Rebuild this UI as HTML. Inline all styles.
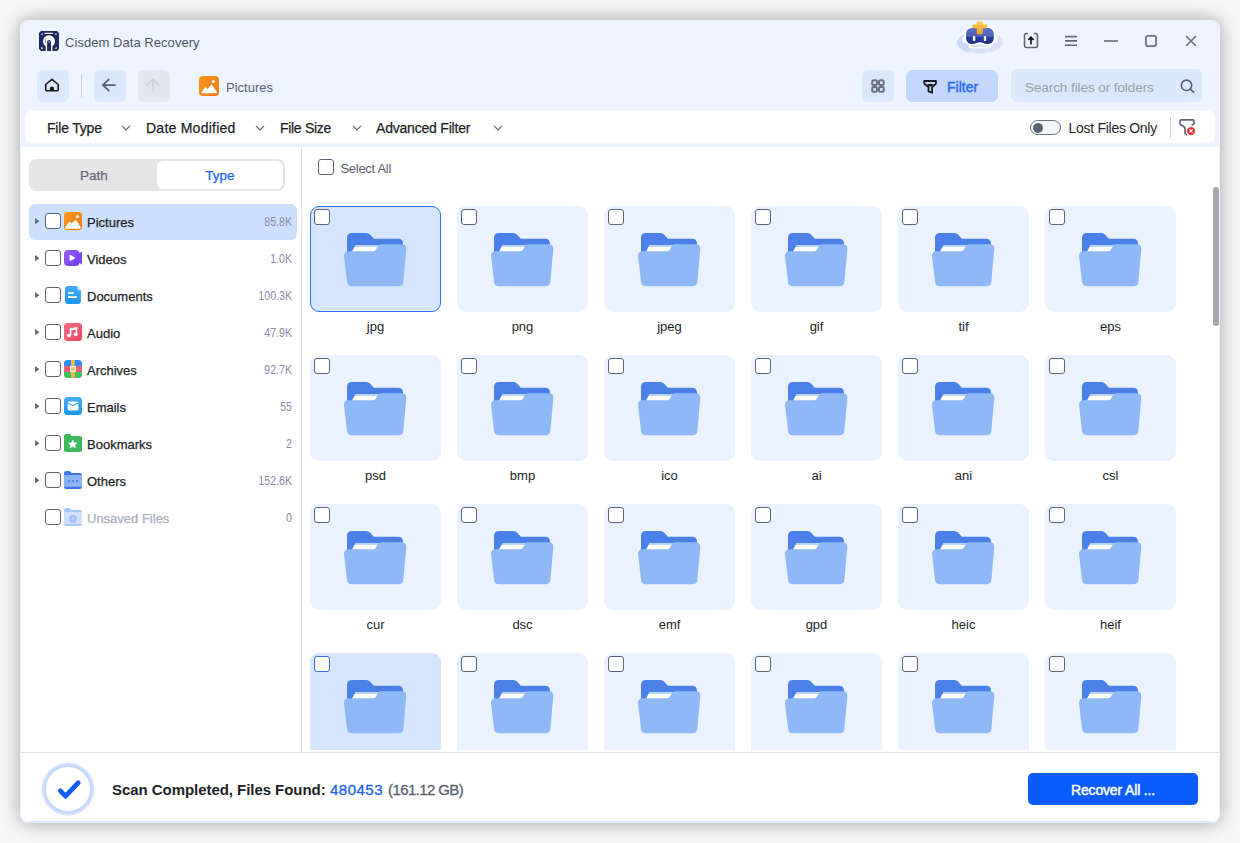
<!DOCTYPE html>
<html><head><meta charset="utf-8">
<style>
*{box-sizing:border-box;margin:0;padding:0}
html,body{width:1240px;height:843px;overflow:hidden;background:#f7f7f7;font-family:"Liberation Sans",sans-serif}
.abs{position:absolute}
#win{position:absolute;left:20px;top:20px;width:1200px;height:803px;background:#edf4ff;border-radius:8px;box-shadow:0 0 20px rgba(0,0,0,0.34)}
.t{position:absolute;white-space:nowrap;line-height:1}
.btn{position:absolute;border-radius:6px}
.chev{position:absolute;width:10px;height:6px}
.cb{position:absolute;width:16px;height:16px;border:1.3px solid #5d6375;border-radius:3px;background:#fff}
.card{position:absolute;width:131px;height:106px;background:#ebf2fe;border-radius:9px}
.lbl{position:absolute;width:131px;text-align:center;font-size:13px;color:#1d1f26;line-height:1}
.fb{font-size:14px;color:#1d1f26;-webkit-text-stroke:0.25px #1d1f26}
</style></head><body>
<div id="win"></div>

<svg class="abs" style="left:39px;top:31px" width="20" height="20" viewBox="0 0 20 20">
  <path d="M2 0H18L20 2V18L18 20H2L0 18V2Z" fill="#1f2a5e"/>
  <rect x="5.3" y="1.8" width="8.8" height="1.3" rx="0.6" fill="#fff" opacity="0.9"/>
  <path d="M2.3 2.2 L4.3 3 L2.6 4.2Z M17.6 2.2 L15.6 3 L17.3 4.2Z M2.2 18 L2.6 15.6 L4.2 17.5Z M17.8 18 L17.4 15.8 L15.8 17.6Z" fill="#fff"/>
  <circle cx="10" cy="10.2" r="6" fill="#fff"/>
  <rect x="6.7" y="14" width="6.7" height="6" fill="#fff"/>
  <path d="M8.1 20 V10.9 Q8.1 9 10.05 9 Q12 9 12 10.9 V20Z" fill="#1f2a5e"/>
  <rect x="9.4" y="10.3" width="1.4" height="1.1" fill="#fff" opacity="0.85"/>
  <path d="M7 7.5 Q5.6 9.8 6.8 12" fill="none" stroke="#1f2a5e" stroke-width="0.5"/>
</svg>
<div class="t" style="left:65px;top:36px;font-size:13px;color:#4d5466;letter-spacing:0.05px">Cisdem Data Recovery</div>

<svg class="abs" style="left:952px;top:18px" width="56" height="40" viewBox="0 0 56 40">
  <defs>
  <linearGradient id="rbh" x1="0" y1="0" x2="0" y2="1"><stop offset="0" stop-color="#5d70c4"/><stop offset="0.5" stop-color="#4e62b6"/><stop offset="0.6" stop-color="#2b3b9d"/><stop offset="1" stop-color="#202f90"/></linearGradient>
  <linearGradient id="rbe" x1="0" y1="0" x2="1" y2="0"><stop offset="0" stop-color="#cad9fa"/><stop offset="1" stop-color="#e3e1fb"/></linearGradient>
  <linearGradient id="rbs" x1="0" y1="0" x2="0" y2="1"><stop offset="0" stop-color="#fdc94c"/><stop offset="1" stop-color="#f5a52a"/></linearGradient>
  <linearGradient id="rbb" x1="0" y1="0" x2="1" y2="0"><stop offset="0" stop-color="#e3d6fb"/><stop offset="1" stop-color="#d3eef7"/></linearGradient>
  </defs>
  <ellipse cx="28" cy="24.5" rx="23" ry="11.2" fill="url(#rbe)"/>
  <path d="M18 33 Q28 37 38 33 L37 35.6 H19Z" fill="#f4f2fd" opacity="0.8"/>
  <ellipse cx="12.3" cy="21.5" rx="2" ry="3.2" fill="#fff"/><ellipse cx="43.6" cy="21.5" rx="2" ry="3.2" fill="#fff"/>
  <path d="M16.5 23 H39.5 V27 Q39.5 30.5 35 30.5 H21 Q16.5 30.5 16.5 27Z" fill="#fff"/>
  <path d="M18 24 H38 V27 Q38 29.3 35 29.3 H21 Q18 29.3 18 27Z" fill="url(#rbb)"/>
  <path d="M14 17 C14 11.5 17 10 21 10 H35 C39 10 41.8 11.5 41.8 17 V19.5 C41.8 24 39 26 35.5 26 C32 26 30.5 24.3 27.9 24.3 C25.3 24.3 23.8 26 20.3 26 C16.8 26 14 24 14 19.5Z" fill="#fff" stroke="#fff" stroke-width="3.2" stroke-linejoin="round"/>
  <path d="M14 17 C14 11.5 17 10 21 10 H35 C39 10 41.8 11.5 41.8 17 V19.5 C41.8 24 39 26 35.5 26 C32 26 30.5 24.3 27.9 24.3 C25.3 24.3 23.8 26 20.3 26 C16.8 26 14 24 14 19.5Z" fill="url(#rbh)"/>
  <rect x="20.9" y="18" width="2.4" height="5" rx="0.8" fill="#fff"/>
  <rect x="31.8" y="18" width="2.4" height="5" rx="0.8" fill="#fff"/>
  <path d="M25.8 4.5 H29.8 V7.5 H34.2 V9.3 H29.8 V15.2 H25.8 V9.3 H21.2 V7.5 H25.8Z" fill="url(#rbs)" stroke="url(#rbs)" stroke-width="2" stroke-linejoin="round"/>
</svg>
<svg class="abs" style="left:1023px;top:32px" width="16" height="17" viewBox="0 0 16 17">
  <path d="M5 1.5 H3.5 Q1.5 1.5 1.5 3.5 V13.5 Q1.5 15.5 3.5 15.5 H12.5 Q14.5 15.5 14.5 13.5 V3.5 Q14.5 1.5 12.5 1.5 H11" fill="none" stroke="#5f6475" stroke-width="1.6"/>
  <path d="M8 12.5 V6.5" stroke="#111" stroke-width="1.6"/>
  <path d="M4.8 7.8 L8 4.3 L11.2 7.8Z" fill="#111" stroke="#111" stroke-width="0.5" stroke-linejoin="round"/>
</svg>
<svg class="abs" style="left:1064px;top:35px" width="14" height="12" viewBox="0 0 14 12">
  <path d="M1 1.6H13M1 5.9H13M1 10.3H13" stroke="#626778" stroke-width="1.6"/>
</svg>
<svg class="abs" style="left:1103px;top:38px" width="16" height="6" viewBox="0 0 16 6">
  <path d="M1 3H15" stroke="#6b7080" stroke-width="1.7"/>
</svg>
<svg class="abs" style="left:1144px;top:34px" width="14" height="14" viewBox="0 0 14 14">
  <rect x="1.9" y="1.9" width="10.2" height="10.2" rx="2" fill="none" stroke="#6b7080" stroke-width="1.8"/>
</svg>
<svg class="abs" style="left:1185px;top:35px" width="12" height="12" viewBox="0 0 12 12">
  <path d="M1 1L11 11M11 1L1 11" stroke="#6b7080" stroke-width="1.6"/>
</svg>

<div class="btn" style="left:37px;top:70px;width:32px;height:32px;background:#dae7fc"></div>
<svg class="abs" style="left:44px;top:77px" width="18" height="18" viewBox="0 0 18 18">
  <path d="M1.7 7.5 L7.95 2.3 L14.2 7.5 V12.8 Q14.2 13.8 13.2 13.8 H2.7 Q1.7 13.8 1.7 12.8Z" fill="none" stroke="#1a1a1a" stroke-width="1.6" stroke-linejoin="round"/>
  <path d="M5.9 13.8 V11.3 Q5.9 9.4 7.95 9.4 Q10 9.4 10 11.3 V13.8Z" fill="#1a1a1a"/>
</svg>
<div class="abs" style="left:81px;top:75px;width:1px;height:22px;background:#c7ccd6"></div>
<div class="btn" style="left:94px;top:70px;width:32px;height:32px;background:#dae7fc"></div>
<svg class="abs" style="left:100px;top:76px" width="20" height="20" viewBox="0 0 20 20">
  <path d="M15.1 9.05 H3.3 M8.8 3.4 L2.9 9.05 L8.8 14.7" fill="none" stroke="#5b6072" stroke-width="1.8" stroke-linecap="round" stroke-linejoin="round"/>
</svg>
<div class="btn" style="left:138px;top:70px;width:32px;height:32px;background:#e2e7ef"></div>
<svg class="abs" style="left:144px;top:76px" width="20" height="20" viewBox="0 0 20 20">
  <path d="M9.05 14.7 V3.3 M3.4 8.8 L9.05 2.9 L14.7 8.8" fill="none" stroke="#cfd2d8" stroke-width="1.8" stroke-linecap="round" stroke-linejoin="round"/>
</svg>
<svg class="abs" style="left:199px;top:76px" width="20" height="20" viewBox="0 0 20 20">
  <defs><linearGradient id="og" x1="0" y1="0" x2="1" y2="1"><stop offset="0" stop-color="#fa961f"/><stop offset="1" stop-color="#ee7a12"/></linearGradient></defs>
  <rect width="20" height="20" rx="4" fill="url(#og)"/>
  <circle cx="14.3" cy="5.5" r="1.6" fill="#fff"/>
  <path d="M2.3 16.5 L6.3 11 L8.5 13 L12.5 8.3 L18 16 Q18 17.3 16.8 17.3 H3.3 Q2 17.3 2.3 16.5Z" fill="#fff"/>
</svg>
<div class="t" style="left:226px;top:80.6px;font-size:13px;color:#5a6275">Pictures</div>

<div class="btn" style="left:862px;top:70px;width:32px;height:32px;background:#dbe7fc"></div>
<svg class="abs" style="left:870px;top:79px" width="16" height="15" viewBox="0 0 16 15">
  <g fill="none" stroke="#6b7080" stroke-width="2">
  <rect x="2.2" y="1.2" width="4.75" height="4.75" rx="1.5"/><rect x="8.95" y="1.2" width="4.75" height="4.75" rx="1.5"/>
  <rect x="2.2" y="7.95" width="4.75" height="4.75" rx="1.5"/><rect x="8.95" y="7.95" width="4.75" height="4.75" rx="1.5"/></g>
</svg>
<div class="btn" style="left:906px;top:70px;width:92px;height:32px;background:#c3d7fc"></div>
<svg class="abs" style="left:922px;top:79px" width="16" height="16" viewBox="0 0 16 16">
  <path d="M2.3 2 H14 V4.6 L10.1 8.3 V13.7 L6.5 12.4 V8.3 L2.3 4.6Z" fill="none" stroke="#16181f" stroke-width="1.8" stroke-linejoin="round"/>
  <path d="M5 5.1 H11.5 L9.6 7.4 H6.9Z" fill="#16181f"/>
</svg>
<div class="t" style="left:947px;top:80.2px;font-size:14px;color:#2a6cf2;-webkit-text-stroke:0.45px #2a6cf2">Filter</div>

<div class="btn" style="left:1011px;top:69px;width:191px;height:33px;background:#dae7fc"></div>
<div class="t" style="left:1025px;top:81px;font-size:13.5px;color:#9a9fa9;letter-spacing:-0.08px">Search files or folders</div>
<svg class="abs" style="left:1179px;top:78px" width="17" height="17" viewBox="0 0 17 17">
  <circle cx="7.5" cy="7.3" r="5.2" fill="none" stroke="#5c6070" stroke-width="1.6"/>
  <path d="M11.3 11.1 L14.6 14.2" stroke="#5c6070" stroke-width="1.7" stroke-linecap="round"/>
</svg>

<div class="abs" style="left:25px;top:111px;width:1190px;height:32px;background:#fff;border-radius:6px"></div>
<div class="t fb" style="left:47px;top:121px;letter-spacing:-0.2px">File Type</div>
<svg class="chev" style="left:121px;top:124.5px" viewBox="0 0 10 6"><path d="M1 0.8L5 4.8L9 0.8" fill="none" stroke="#5f6475" stroke-width="1.2"/></svg>
<div class="t fb" style="left:146px;top:121px;letter-spacing:0.25px">Date Modified</div>
<svg class="chev" style="left:255px;top:124.5px" viewBox="0 0 10 6"><path d="M1 0.8L5 4.8L9 0.8" fill="none" stroke="#5f6475" stroke-width="1.2"/></svg>
<div class="t fb" style="left:280px;top:121px;letter-spacing:-0.3px">File Size</div>
<svg class="chev" style="left:351.5px;top:124.5px" viewBox="0 0 10 6"><path d="M1 0.8L5 4.8L9 0.8" fill="none" stroke="#5f6475" stroke-width="1.2"/></svg>
<div class="t fb" style="left:376px;top:121px;letter-spacing:-0.2px">Advanced Filter</div>
<svg class="chev" style="left:492.5px;top:124.5px" viewBox="0 0 10 6"><path d="M1 0.8L5 4.8L9 0.8" fill="none" stroke="#5f6475" stroke-width="1.2"/></svg>
<div class="abs" style="left:1030px;top:120px;width:31px;height:15px;border:1.3px solid #6b7080;border-radius:8px;background:#f6f7f9"></div>
<div class="abs" style="left:1033px;top:122.5px;width:10px;height:10px;border-radius:50%;background:#5c6275"></div>
<div class="t" style="left:1068.5px;top:121px;font-size:14px;color:#1d1f26;letter-spacing:-0.28px">Lost Files Only</div>
<div class="abs" style="left:1170px;top:117px;width:1px;height:21px;background:#c8ccd4"></div>
<svg class="abs" style="left:1178px;top:118px" width="20" height="20" viewBox="0 0 20 20">
  <path d="M14.3 6.8 Q16 6.6 16 5.3 V3 Q16 1.9 14.9 1.9 H3.2 Q2.1 1.9 2.1 3 V5.6 Q2.1 6.5 3 7 L6.2 9 Q7 9.6 7 10.5 V15 Q7 16.3 8.6 16.8" fill="none" stroke="#60657a" stroke-width="1.7" stroke-linecap="round" stroke-linejoin="round"/>
  <circle cx="13" cy="13" r="4.3" fill="#f0252f" stroke="#fff" stroke-width="0.6"/>
  <path d="M11.4 11.4 L14.6 14.6 M14.6 11.4 L11.4 14.6" stroke="#fff" stroke-width="1.3"/>
</svg>

<div class="abs" style="left:21px;top:147px;width:1198px;height:674px;background:#fff;border-radius:0 0 7px 7px"></div>
<div class="abs" style="left:301px;top:147px;width:1px;height:605px;background:#e4e4e6"></div>
<div class="abs" style="left:21px;top:752px;width:1198px;height:1px;background:#e2e2e4"></div>
<div class="abs" style="left:28px;top:821px;width:1184px;height:2px;background:#dde9fc"></div>

<div class="abs" style="left:29px;top:159px;width:256px;height:32px;background:#e5e5e5;border-radius:7px"></div>
<div class="abs" style="left:157px;top:161px;width:126px;height:28px;background:#fff;border-radius:6px"></div>
<div class="t" style="left:30px;top:169.2px;width:128px;text-align:center;font-size:13.5px;color:#646a78;-webkit-text-stroke:0.25px #646a78">Path</div>
<div class="t" style="left:157px;top:169.2px;width:126px;text-align:center;font-size:13.5px;color:#1a62f0;-webkit-text-stroke:0.25px #1a62f0">Type</div>
<div class="abs" style="left:29px;top:204px;width:268px;height:36px;background:#cde0fb;border-radius:6px"></div>

<svg class="abs" style="left:35px;top:217.8px" width="6" height="8" viewBox="0 0 6 8"><path d="M0.1 0 L4.4 3.15 L0.1 6.3Z" fill="#5f6475"/></svg>
<div class="cb" style="left:45px;top:213px"></div>
<svg class="abs" style="left:64px;top:212px" width="18" height="18" viewBox="0 0 18 18"><defs><linearGradient id="og2" x1="0" y1="0" x2="1" y2="1"><stop offset="0" stop-color="#fb9a22"/><stop offset="1" stop-color="#ee7810"/></linearGradient></defs>
<rect width="18" height="18" rx="3.5" fill="url(#og2)"/><circle cx="13.5" cy="4.4" r="1.5" fill="#fff"/>
<path d="M1.2 15.3 L5.3 9.4 L7.3 11.6 L11.9 7.7 L16.7 15.3 Q17 16.7 15.6 16.7 H2.4 Q1 16.7 1.2 15.3Z" fill="#fff"/></svg>
<div class="t" style="left:87px;top:215.7px;font-size:13px;color:#1d1f26;-webkit-text-stroke:0.25px #1d1f26">Pictures</div>
<div class="t" style="left:192px;top:216.2px;width:100px;text-align:right;font-size:12.5px;color:#8a8aa8;transform:scaleX(0.85);transform-origin:right center">85.8K</div>
<svg class="abs" style="left:35px;top:254.8px" width="6" height="8" viewBox="0 0 6 8"><path d="M0.1 0 L4.4 3.15 L0.1 6.3Z" fill="#5f6475"/></svg>
<div class="cb" style="left:45px;top:250px"></div>
<svg class="abs" style="left:64px;top:249px" width="18" height="18" viewBox="0 0 18 18"><defs><linearGradient id="vg" x1="0" y1="0" x2="1" y2="1"><stop offset="0" stop-color="#9d60f7"/><stop offset="1" stop-color="#6b3bf0"/></linearGradient></defs>
<rect x="0" y="1" width="15.5" height="15.9" rx="4" fill="url(#vg)"/>
<path d="M14.5 5 L18 2.3 V15.7 L14.5 13Z" fill="#7a48f2"/>
<path d="M5.6 6.3 Q5.6 5.5 6.4 5.9 L10.8 8.4 Q11.4 8.9 10.8 9.4 L6.4 11.8 Q5.6 12.2 5.6 11.4Z" fill="#fff"/></svg>
<div class="t" style="left:87px;top:252.7px;font-size:13px;color:#1d1f26;-webkit-text-stroke:0.25px #1d1f26">Videos</div>
<div class="t" style="left:192px;top:253.2px;width:100px;text-align:right;font-size:12.5px;color:#8a8aa8;transform:scaleX(0.85);transform-origin:right center">1.0K</div>
<svg class="abs" style="left:35px;top:291.8px" width="6" height="8" viewBox="0 0 6 8"><path d="M0.1 0 L4.4 3.15 L0.1 6.3Z" fill="#5f6475"/></svg>
<div class="cb" style="left:45px;top:287px"></div>
<svg class="abs" style="left:64px;top:286px" width="18" height="18" viewBox="0 0 18 18"><defs><linearGradient id="dg" x1="0" y1="0" x2="0" y2="1"><stop offset="0" stop-color="#44acf7"/><stop offset="1" stop-color="#1a98f0"/></linearGradient></defs>
<path d="M4 0 H12.9 L16.9 4.4 V14.9 Q16.9 17.9 13.9 17.9 H4 Q1 17.9 1 14.9 V3 Q1 0 4 0Z" fill="url(#dg)"/>
<path d="M12.9 0 L16.9 4.4 H14.4 Q12.9 4.4 12.9 2.9Z" fill="#a6d6fc"/>
<rect x="4" y="6.2" width="5.7" height="1.7" fill="#fff"/><rect x="4" y="10.2" width="8.8" height="1.8" fill="#fff"/></svg>
<div class="t" style="left:87px;top:289.7px;font-size:13px;color:#1d1f26;-webkit-text-stroke:0.25px #1d1f26">Documents</div>
<div class="t" style="left:192px;top:290.2px;width:100px;text-align:right;font-size:12.5px;color:#8a8aa8;transform:scaleX(0.85);transform-origin:right center">100.3K</div>
<svg class="abs" style="left:35px;top:328.8px" width="6" height="8" viewBox="0 0 6 8"><path d="M0.1 0 L4.4 3.15 L0.1 6.3Z" fill="#5f6475"/></svg>
<div class="cb" style="left:45px;top:324px"></div>
<svg class="abs" style="left:64px;top:323px" width="18" height="18" viewBox="0 0 18 18"><defs><linearGradient id="ag" x1="0" y1="0" x2="1" y2="1"><stop offset="0" stop-color="#f7728a"/><stop offset="1" stop-color="#e9455c"/></linearGradient></defs>
<rect width="18" height="18" rx="3.5" fill="url(#ag)"/>
<path d="M5.8 5.2 L13.3 4 V6.5 L5.8 7.6Z" fill="#fff"/>
<rect x="5.8" y="5.2" width="1.5" height="7.5" fill="#fff"/><rect x="11.8" y="4.2" width="1.5" height="7.2" fill="#fff"/>
<ellipse cx="4.9" cy="12.6" rx="2" ry="1.8" fill="#fff"/><ellipse cx="11.7" cy="11.3" rx="2" ry="1.8" fill="#fff"/></svg>
<div class="t" style="left:87px;top:326.7px;font-size:13px;color:#1d1f26;-webkit-text-stroke:0.25px #1d1f26">Audio</div>
<div class="t" style="left:192px;top:327.2px;width:100px;text-align:right;font-size:12.5px;color:#8a8aa8;transform:scaleX(0.85);transform-origin:right center">47.9K</div>
<svg class="abs" style="left:35px;top:365.8px" width="6" height="8" viewBox="0 0 6 8"><path d="M0.1 0 L4.4 3.15 L0.1 6.3Z" fill="#5f6475"/></svg>
<div class="cb" style="left:45px;top:361px"></div>
<svg class="abs" style="left:64px;top:360px" width="18" height="18" viewBox="0 0 18 18"><defs><clipPath id="arc"><rect width="18" height="18" rx="3.5"/></clipPath></defs>
<g clip-path="url(#arc)"><rect width="18" height="6" fill="#2d8ff7"/><rect y="6" width="18" height="6" fill="#ef5d72"/><rect y="12" width="18" height="6" fill="#3ec061"/>
<rect x="7.1" width="3.7" height="18" fill="#f8b649"/></g>
<rect x="6" y="6" width="5.9" height="5.9" rx="0.8" fill="#fff"/><rect x="7.3" y="7.3" width="3.4" height="3.4" fill="#f8b649"/></svg>
<div class="t" style="left:87px;top:363.7px;font-size:13px;color:#1d1f26;-webkit-text-stroke:0.25px #1d1f26">Archives</div>
<div class="t" style="left:192px;top:364.2px;width:100px;text-align:right;font-size:12.5px;color:#8a8aa8;transform:scaleX(0.85);transform-origin:right center">92.7K</div>
<svg class="abs" style="left:35px;top:402.8px" width="6" height="8" viewBox="0 0 6 8"><path d="M0.1 0 L4.4 3.15 L0.1 6.3Z" fill="#5f6475"/></svg>
<div class="cb" style="left:45px;top:398px"></div>
<svg class="abs" style="left:64px;top:397px" width="18" height="18" viewBox="0 0 18 18"><defs><linearGradient id="eg" x1="0" y1="0" x2="0" y2="1"><stop offset="0" stop-color="#42adf8"/><stop offset="1" stop-color="#1a98f2"/></linearGradient></defs>
<rect width="18" height="18" rx="3.5" fill="url(#eg)"/>
<rect x="3.7" y="4.5" width="10.8" height="9" rx="1.4" fill="#fff"/>
<path d="M3.7 6 L9.1 8.7 L14.5 6" fill="none" stroke="#36a6f6" stroke-width="1.2"/></svg>
<div class="t" style="left:87px;top:400.7px;font-size:13px;color:#1d1f26;-webkit-text-stroke:0.25px #1d1f26">Emails</div>
<div class="t" style="left:192px;top:401.2px;width:100px;text-align:right;font-size:12.5px;color:#8a8aa8;transform:scaleX(0.85);transform-origin:right center">55</div>
<svg class="abs" style="left:35px;top:439.8px" width="6" height="8" viewBox="0 0 6 8"><path d="M0.1 0 L4.4 3.15 L0.1 6.3Z" fill="#5f6475"/></svg>
<div class="cb" style="left:45px;top:435px"></div>
<svg class="abs" style="left:64px;top:434px" width="18" height="18" viewBox="0 0 18 18"><path d="M0 2 Q0 0 2 0 H5.8 L7.6 1.9 H16 Q18 1.9 18 3.9 V16 Q18 18 16 18 H2 Q0 18 0 16Z" fill="#3eb95d"/>
<path d="M8.8 6 L10.1 8.8 L13.2 9.1 L10.9 11.1 L11.6 14.1 L8.8 12.5 L6 14.1 L6.7 11.1 L4.4 9.1 L7.5 8.8Z" fill="#fff" stroke="#fff" stroke-width="0.4" stroke-linejoin="round"/></svg>
<div class="t" style="left:87px;top:437.7px;font-size:13px;color:#1d1f26;-webkit-text-stroke:0.25px #1d1f26">Bookmarks</div>
<div class="t" style="left:192px;top:438.2px;width:100px;text-align:right;font-size:12.5px;color:#8a8aa8;transform:scaleX(0.85);transform-origin:right center">2</div>
<svg class="abs" style="left:35px;top:476.8px" width="6" height="8" viewBox="0 0 6 8"><path d="M0.1 0 L4.4 3.15 L0.1 6.3Z" fill="#5f6475"/></svg>
<div class="cb" style="left:45px;top:472px"></div>
<svg class="abs" style="left:64px;top:471px" width="18" height="18" viewBox="0 0 18 18"><path d="M0 2 Q0 0 2 0 H5.8 L7.6 1.9 H16 Q18 1.9 18 3.9 V16 Q18 18 16 18 H2 Q0 18 0 16Z" fill="#3d74e8"/>
<rect x="0" y="4" width="18" height="11.8" fill="#8cb3f7"/>
<rect x="3.9" y="9.1" width="2" height="2" fill="#4a80ea"/><rect x="7.9" y="9.1" width="2" height="2" fill="#4a80ea"/><rect x="12" y="9.1" width="2" height="2" fill="#4a80ea"/></svg>
<div class="t" style="left:87px;top:474.7px;font-size:13px;color:#1d1f26;-webkit-text-stroke:0.25px #1d1f26">Others</div>
<div class="t" style="left:192px;top:475.2px;width:100px;text-align:right;font-size:12.5px;color:#8a8aa8;transform:scaleX(0.85);transform-origin:right center">152.6K</div>
<div class="cb" style="left:45px;top:509px"></div>
<svg class="abs" style="left:64px;top:508px" width="18" height="18" viewBox="0 0 18 18"><path d="M0 2 Q0 0 2 0 H5.8 L7.6 1.9 H16 Q18 1.9 18 3.9 V16 Q18 18 16 18 H2 Q0 18 0 16Z" fill="#aac6f8"/>
<rect x="0" y="4" width="18" height="12" fill="#cfdffc"/>
<circle cx="9" cy="10.75" r="3.9" fill="#a3c1f8"/><path d="M8.7 8.8 V10.9 L10.2 12" fill="none" stroke="#d5e3fd" stroke-width="0.9"/></svg>
<div class="t" style="left:87px;top:511.7px;font-size:13px;color:#a9b0bd;-webkit-text-stroke:0.25px #a9b0bd">Unsaved Files</div>
<div class="t" style="left:192px;top:512.2px;width:100px;text-align:right;font-size:12.5px;color:#8a8aa8;transform:scaleX(0.85);transform-origin:right center">0</div>
<div class="cb" style="left:318px;top:159px"></div>
<div class="t" style="left:340.5px;top:161.8px;font-size:13px;color:#5a6070;letter-spacing:-0.3px">Select All</div>
<div class="abs" style="left:1213px;top:187px;width:6px;height:139px;background:#a3a7b1;border-radius:3px"></div>

<div class="abs" style="left:302px;top:147px;width:911px;height:603px;overflow:hidden">
<div class="card" style="left:8px;top:59px;background:#d5e5fd;border:1.3px solid #2a70f2;"></div>
<div class="cb" style="left:12px;top:62px;border-color:#5d6375"></div>
<svg class="abs" style="left:42px;top:86px" width="63" height="54" viewBox="0 0 63 54">
<path d="M3 5 Q3 0 8 0 H22.5 Q24.5 0 26 1.5 L29.8 5.8 H54 Q59 5.8 59 10.8 V40 H3Z" fill="#4a80e8"/>
<path d="M7.8 20 L11.4 12 H52 V20Z" fill="#bcd3f8"/>
<path d="M7.3 20 L10.5 13.9 H52 V20Z" fill="#fffdf8"/>
<path d="M0 23 Q0 18.3 4.7 18.3 H29 Q30.8 18.3 31.8 16.8 L34 13 Q35 11.3 37 11.3 H57.7 Q62.6 11.3 62.3 16.2 L59.4 48.4 Q59 53.3 54.1 53.3 H8.3 Q3.4 53.3 3 48.4Z" fill="#8fb8f7"/>
</svg>
<div class="lbl" style="left:8px;top:173px">jpg</div>
<div class="card" style="left:155px;top:59px;background:#eaf2ff;"></div>
<div class="cb" style="left:159px;top:62px;border-color:#5d6375"></div>
<svg class="abs" style="left:189px;top:86px" width="63" height="54" viewBox="0 0 63 54">
<path d="M3 5 Q3 0 8 0 H22.5 Q24.5 0 26 1.5 L29.8 5.8 H54 Q59 5.8 59 10.8 V40 H3Z" fill="#4a80e8"/>
<path d="M7.8 20 L11.4 12 H52 V20Z" fill="#bcd3f8"/>
<path d="M7.3 20 L10.5 13.9 H52 V20Z" fill="#fffdf8"/>
<path d="M0 23 Q0 18.3 4.7 18.3 H29 Q30.8 18.3 31.8 16.8 L34 13 Q35 11.3 37 11.3 H57.7 Q62.6 11.3 62.3 16.2 L59.4 48.4 Q59 53.3 54.1 53.3 H8.3 Q3.4 53.3 3 48.4Z" fill="#8fb8f7"/>
</svg>
<div class="lbl" style="left:155px;top:173px">png</div>
<div class="card" style="left:302px;top:59px;background:#eaf2ff;"></div>
<div class="cb" style="left:306px;top:62px;border-color:#5d6375"></div>
<svg class="abs" style="left:336px;top:86px" width="63" height="54" viewBox="0 0 63 54">
<path d="M3 5 Q3 0 8 0 H22.5 Q24.5 0 26 1.5 L29.8 5.8 H54 Q59 5.8 59 10.8 V40 H3Z" fill="#4a80e8"/>
<path d="M7.8 20 L11.4 12 H52 V20Z" fill="#bcd3f8"/>
<path d="M7.3 20 L10.5 13.9 H52 V20Z" fill="#fffdf8"/>
<path d="M0 23 Q0 18.3 4.7 18.3 H29 Q30.8 18.3 31.8 16.8 L34 13 Q35 11.3 37 11.3 H57.7 Q62.6 11.3 62.3 16.2 L59.4 48.4 Q59 53.3 54.1 53.3 H8.3 Q3.4 53.3 3 48.4Z" fill="#8fb8f7"/>
</svg>
<div class="lbl" style="left:302px;top:173px">jpeg</div>
<div class="card" style="left:449px;top:59px;background:#eaf2ff;"></div>
<div class="cb" style="left:453px;top:62px;border-color:#5d6375"></div>
<svg class="abs" style="left:483px;top:86px" width="63" height="54" viewBox="0 0 63 54">
<path d="M3 5 Q3 0 8 0 H22.5 Q24.5 0 26 1.5 L29.8 5.8 H54 Q59 5.8 59 10.8 V40 H3Z" fill="#4a80e8"/>
<path d="M7.8 20 L11.4 12 H52 V20Z" fill="#bcd3f8"/>
<path d="M7.3 20 L10.5 13.9 H52 V20Z" fill="#fffdf8"/>
<path d="M0 23 Q0 18.3 4.7 18.3 H29 Q30.8 18.3 31.8 16.8 L34 13 Q35 11.3 37 11.3 H57.7 Q62.6 11.3 62.3 16.2 L59.4 48.4 Q59 53.3 54.1 53.3 H8.3 Q3.4 53.3 3 48.4Z" fill="#8fb8f7"/>
</svg>
<div class="lbl" style="left:449px;top:173px">gif</div>
<div class="card" style="left:596px;top:59px;background:#eaf2ff;"></div>
<div class="cb" style="left:600px;top:62px;border-color:#5d6375"></div>
<svg class="abs" style="left:630px;top:86px" width="63" height="54" viewBox="0 0 63 54">
<path d="M3 5 Q3 0 8 0 H22.5 Q24.5 0 26 1.5 L29.8 5.8 H54 Q59 5.8 59 10.8 V40 H3Z" fill="#4a80e8"/>
<path d="M7.8 20 L11.4 12 H52 V20Z" fill="#bcd3f8"/>
<path d="M7.3 20 L10.5 13.9 H52 V20Z" fill="#fffdf8"/>
<path d="M0 23 Q0 18.3 4.7 18.3 H29 Q30.8 18.3 31.8 16.8 L34 13 Q35 11.3 37 11.3 H57.7 Q62.6 11.3 62.3 16.2 L59.4 48.4 Q59 53.3 54.1 53.3 H8.3 Q3.4 53.3 3 48.4Z" fill="#8fb8f7"/>
</svg>
<div class="lbl" style="left:596px;top:173px">tif</div>
<div class="card" style="left:743px;top:59px;background:#eaf2ff;"></div>
<div class="cb" style="left:747px;top:62px;border-color:#5d6375"></div>
<svg class="abs" style="left:777px;top:86px" width="63" height="54" viewBox="0 0 63 54">
<path d="M3 5 Q3 0 8 0 H22.5 Q24.5 0 26 1.5 L29.8 5.8 H54 Q59 5.8 59 10.8 V40 H3Z" fill="#4a80e8"/>
<path d="M7.8 20 L11.4 12 H52 V20Z" fill="#bcd3f8"/>
<path d="M7.3 20 L10.5 13.9 H52 V20Z" fill="#fffdf8"/>
<path d="M0 23 Q0 18.3 4.7 18.3 H29 Q30.8 18.3 31.8 16.8 L34 13 Q35 11.3 37 11.3 H57.7 Q62.6 11.3 62.3 16.2 L59.4 48.4 Q59 53.3 54.1 53.3 H8.3 Q3.4 53.3 3 48.4Z" fill="#8fb8f7"/>
</svg>
<div class="lbl" style="left:743px;top:173px">eps</div>
<div class="card" style="left:8px;top:208px;background:#eaf2ff;"></div>
<div class="cb" style="left:12px;top:211px;border-color:#5d6375"></div>
<svg class="abs" style="left:42px;top:235px" width="63" height="54" viewBox="0 0 63 54">
<path d="M3 5 Q3 0 8 0 H22.5 Q24.5 0 26 1.5 L29.8 5.8 H54 Q59 5.8 59 10.8 V40 H3Z" fill="#4a80e8"/>
<path d="M7.8 20 L11.4 12 H52 V20Z" fill="#bcd3f8"/>
<path d="M7.3 20 L10.5 13.9 H52 V20Z" fill="#fffdf8"/>
<path d="M0 23 Q0 18.3 4.7 18.3 H29 Q30.8 18.3 31.8 16.8 L34 13 Q35 11.3 37 11.3 H57.7 Q62.6 11.3 62.3 16.2 L59.4 48.4 Q59 53.3 54.1 53.3 H8.3 Q3.4 53.3 3 48.4Z" fill="#8fb8f7"/>
</svg>
<div class="lbl" style="left:8px;top:322px">psd</div>
<div class="card" style="left:155px;top:208px;background:#eaf2ff;"></div>
<div class="cb" style="left:159px;top:211px;border-color:#5d6375"></div>
<svg class="abs" style="left:189px;top:235px" width="63" height="54" viewBox="0 0 63 54">
<path d="M3 5 Q3 0 8 0 H22.5 Q24.5 0 26 1.5 L29.8 5.8 H54 Q59 5.8 59 10.8 V40 H3Z" fill="#4a80e8"/>
<path d="M7.8 20 L11.4 12 H52 V20Z" fill="#bcd3f8"/>
<path d="M7.3 20 L10.5 13.9 H52 V20Z" fill="#fffdf8"/>
<path d="M0 23 Q0 18.3 4.7 18.3 H29 Q30.8 18.3 31.8 16.8 L34 13 Q35 11.3 37 11.3 H57.7 Q62.6 11.3 62.3 16.2 L59.4 48.4 Q59 53.3 54.1 53.3 H8.3 Q3.4 53.3 3 48.4Z" fill="#8fb8f7"/>
</svg>
<div class="lbl" style="left:155px;top:322px">bmp</div>
<div class="card" style="left:302px;top:208px;background:#eaf2ff;"></div>
<div class="cb" style="left:306px;top:211px;border-color:#5d6375"></div>
<svg class="abs" style="left:336px;top:235px" width="63" height="54" viewBox="0 0 63 54">
<path d="M3 5 Q3 0 8 0 H22.5 Q24.5 0 26 1.5 L29.8 5.8 H54 Q59 5.8 59 10.8 V40 H3Z" fill="#4a80e8"/>
<path d="M7.8 20 L11.4 12 H52 V20Z" fill="#bcd3f8"/>
<path d="M7.3 20 L10.5 13.9 H52 V20Z" fill="#fffdf8"/>
<path d="M0 23 Q0 18.3 4.7 18.3 H29 Q30.8 18.3 31.8 16.8 L34 13 Q35 11.3 37 11.3 H57.7 Q62.6 11.3 62.3 16.2 L59.4 48.4 Q59 53.3 54.1 53.3 H8.3 Q3.4 53.3 3 48.4Z" fill="#8fb8f7"/>
</svg>
<div class="lbl" style="left:302px;top:322px">ico</div>
<div class="card" style="left:449px;top:208px;background:#eaf2ff;"></div>
<div class="cb" style="left:453px;top:211px;border-color:#5d6375"></div>
<svg class="abs" style="left:483px;top:235px" width="63" height="54" viewBox="0 0 63 54">
<path d="M3 5 Q3 0 8 0 H22.5 Q24.5 0 26 1.5 L29.8 5.8 H54 Q59 5.8 59 10.8 V40 H3Z" fill="#4a80e8"/>
<path d="M7.8 20 L11.4 12 H52 V20Z" fill="#bcd3f8"/>
<path d="M7.3 20 L10.5 13.9 H52 V20Z" fill="#fffdf8"/>
<path d="M0 23 Q0 18.3 4.7 18.3 H29 Q30.8 18.3 31.8 16.8 L34 13 Q35 11.3 37 11.3 H57.7 Q62.6 11.3 62.3 16.2 L59.4 48.4 Q59 53.3 54.1 53.3 H8.3 Q3.4 53.3 3 48.4Z" fill="#8fb8f7"/>
</svg>
<div class="lbl" style="left:449px;top:322px">ai</div>
<div class="card" style="left:596px;top:208px;background:#eaf2ff;"></div>
<div class="cb" style="left:600px;top:211px;border-color:#5d6375"></div>
<svg class="abs" style="left:630px;top:235px" width="63" height="54" viewBox="0 0 63 54">
<path d="M3 5 Q3 0 8 0 H22.5 Q24.5 0 26 1.5 L29.8 5.8 H54 Q59 5.8 59 10.8 V40 H3Z" fill="#4a80e8"/>
<path d="M7.8 20 L11.4 12 H52 V20Z" fill="#bcd3f8"/>
<path d="M7.3 20 L10.5 13.9 H52 V20Z" fill="#fffdf8"/>
<path d="M0 23 Q0 18.3 4.7 18.3 H29 Q30.8 18.3 31.8 16.8 L34 13 Q35 11.3 37 11.3 H57.7 Q62.6 11.3 62.3 16.2 L59.4 48.4 Q59 53.3 54.1 53.3 H8.3 Q3.4 53.3 3 48.4Z" fill="#8fb8f7"/>
</svg>
<div class="lbl" style="left:596px;top:322px">ani</div>
<div class="card" style="left:743px;top:208px;background:#eaf2ff;"></div>
<div class="cb" style="left:747px;top:211px;border-color:#5d6375"></div>
<svg class="abs" style="left:777px;top:235px" width="63" height="54" viewBox="0 0 63 54">
<path d="M3 5 Q3 0 8 0 H22.5 Q24.5 0 26 1.5 L29.8 5.8 H54 Q59 5.8 59 10.8 V40 H3Z" fill="#4a80e8"/>
<path d="M7.8 20 L11.4 12 H52 V20Z" fill="#bcd3f8"/>
<path d="M7.3 20 L10.5 13.9 H52 V20Z" fill="#fffdf8"/>
<path d="M0 23 Q0 18.3 4.7 18.3 H29 Q30.8 18.3 31.8 16.8 L34 13 Q35 11.3 37 11.3 H57.7 Q62.6 11.3 62.3 16.2 L59.4 48.4 Q59 53.3 54.1 53.3 H8.3 Q3.4 53.3 3 48.4Z" fill="#8fb8f7"/>
</svg>
<div class="lbl" style="left:743px;top:322px">csl</div>
<div class="card" style="left:8px;top:357px;background:#eaf2ff;"></div>
<div class="cb" style="left:12px;top:360px;border-color:#5d6375"></div>
<svg class="abs" style="left:42px;top:384px" width="63" height="54" viewBox="0 0 63 54">
<path d="M3 5 Q3 0 8 0 H22.5 Q24.5 0 26 1.5 L29.8 5.8 H54 Q59 5.8 59 10.8 V40 H3Z" fill="#4a80e8"/>
<path d="M7.8 20 L11.4 12 H52 V20Z" fill="#bcd3f8"/>
<path d="M7.3 20 L10.5 13.9 H52 V20Z" fill="#fffdf8"/>
<path d="M0 23 Q0 18.3 4.7 18.3 H29 Q30.8 18.3 31.8 16.8 L34 13 Q35 11.3 37 11.3 H57.7 Q62.6 11.3 62.3 16.2 L59.4 48.4 Q59 53.3 54.1 53.3 H8.3 Q3.4 53.3 3 48.4Z" fill="#8fb8f7"/>
</svg>
<div class="lbl" style="left:8px;top:471px">cur</div>
<div class="card" style="left:155px;top:357px;background:#eaf2ff;"></div>
<div class="cb" style="left:159px;top:360px;border-color:#5d6375"></div>
<svg class="abs" style="left:189px;top:384px" width="63" height="54" viewBox="0 0 63 54">
<path d="M3 5 Q3 0 8 0 H22.5 Q24.5 0 26 1.5 L29.8 5.8 H54 Q59 5.8 59 10.8 V40 H3Z" fill="#4a80e8"/>
<path d="M7.8 20 L11.4 12 H52 V20Z" fill="#bcd3f8"/>
<path d="M7.3 20 L10.5 13.9 H52 V20Z" fill="#fffdf8"/>
<path d="M0 23 Q0 18.3 4.7 18.3 H29 Q30.8 18.3 31.8 16.8 L34 13 Q35 11.3 37 11.3 H57.7 Q62.6 11.3 62.3 16.2 L59.4 48.4 Q59 53.3 54.1 53.3 H8.3 Q3.4 53.3 3 48.4Z" fill="#8fb8f7"/>
</svg>
<div class="lbl" style="left:155px;top:471px">dsc</div>
<div class="card" style="left:302px;top:357px;background:#eaf2ff;"></div>
<div class="cb" style="left:306px;top:360px;border-color:#5d6375"></div>
<svg class="abs" style="left:336px;top:384px" width="63" height="54" viewBox="0 0 63 54">
<path d="M3 5 Q3 0 8 0 H22.5 Q24.5 0 26 1.5 L29.8 5.8 H54 Q59 5.8 59 10.8 V40 H3Z" fill="#4a80e8"/>
<path d="M7.8 20 L11.4 12 H52 V20Z" fill="#bcd3f8"/>
<path d="M7.3 20 L10.5 13.9 H52 V20Z" fill="#fffdf8"/>
<path d="M0 23 Q0 18.3 4.7 18.3 H29 Q30.8 18.3 31.8 16.8 L34 13 Q35 11.3 37 11.3 H57.7 Q62.6 11.3 62.3 16.2 L59.4 48.4 Q59 53.3 54.1 53.3 H8.3 Q3.4 53.3 3 48.4Z" fill="#8fb8f7"/>
</svg>
<div class="lbl" style="left:302px;top:471px">emf</div>
<div class="card" style="left:449px;top:357px;background:#eaf2ff;"></div>
<div class="cb" style="left:453px;top:360px;border-color:#5d6375"></div>
<svg class="abs" style="left:483px;top:384px" width="63" height="54" viewBox="0 0 63 54">
<path d="M3 5 Q3 0 8 0 H22.5 Q24.5 0 26 1.5 L29.8 5.8 H54 Q59 5.8 59 10.8 V40 H3Z" fill="#4a80e8"/>
<path d="M7.8 20 L11.4 12 H52 V20Z" fill="#bcd3f8"/>
<path d="M7.3 20 L10.5 13.9 H52 V20Z" fill="#fffdf8"/>
<path d="M0 23 Q0 18.3 4.7 18.3 H29 Q30.8 18.3 31.8 16.8 L34 13 Q35 11.3 37 11.3 H57.7 Q62.6 11.3 62.3 16.2 L59.4 48.4 Q59 53.3 54.1 53.3 H8.3 Q3.4 53.3 3 48.4Z" fill="#8fb8f7"/>
</svg>
<div class="lbl" style="left:449px;top:471px">gpd</div>
<div class="card" style="left:596px;top:357px;background:#eaf2ff;"></div>
<div class="cb" style="left:600px;top:360px;border-color:#5d6375"></div>
<svg class="abs" style="left:630px;top:384px" width="63" height="54" viewBox="0 0 63 54">
<path d="M3 5 Q3 0 8 0 H22.5 Q24.5 0 26 1.5 L29.8 5.8 H54 Q59 5.8 59 10.8 V40 H3Z" fill="#4a80e8"/>
<path d="M7.8 20 L11.4 12 H52 V20Z" fill="#bcd3f8"/>
<path d="M7.3 20 L10.5 13.9 H52 V20Z" fill="#fffdf8"/>
<path d="M0 23 Q0 18.3 4.7 18.3 H29 Q30.8 18.3 31.8 16.8 L34 13 Q35 11.3 37 11.3 H57.7 Q62.6 11.3 62.3 16.2 L59.4 48.4 Q59 53.3 54.1 53.3 H8.3 Q3.4 53.3 3 48.4Z" fill="#8fb8f7"/>
</svg>
<div class="lbl" style="left:596px;top:471px">heic</div>
<div class="card" style="left:743px;top:357px;background:#eaf2ff;"></div>
<div class="cb" style="left:747px;top:360px;border-color:#5d6375"></div>
<svg class="abs" style="left:777px;top:384px" width="63" height="54" viewBox="0 0 63 54">
<path d="M3 5 Q3 0 8 0 H22.5 Q24.5 0 26 1.5 L29.8 5.8 H54 Q59 5.8 59 10.8 V40 H3Z" fill="#4a80e8"/>
<path d="M7.8 20 L11.4 12 H52 V20Z" fill="#bcd3f8"/>
<path d="M7.3 20 L10.5 13.9 H52 V20Z" fill="#fffdf8"/>
<path d="M0 23 Q0 18.3 4.7 18.3 H29 Q30.8 18.3 31.8 16.8 L34 13 Q35 11.3 37 11.3 H57.7 Q62.6 11.3 62.3 16.2 L59.4 48.4 Q59 53.3 54.1 53.3 H8.3 Q3.4 53.3 3 48.4Z" fill="#8fb8f7"/>
</svg>
<div class="lbl" style="left:743px;top:471px">heif</div>
<div class="card" style="left:8px;top:506px;background:#d5e5fd;"></div>
<div class="cb" style="left:12px;top:509px;border-color:#2a6cf0"></div>
<svg class="abs" style="left:42px;top:533px" width="63" height="54" viewBox="0 0 63 54">
<path d="M3 5 Q3 0 8 0 H22.5 Q24.5 0 26 1.5 L29.8 5.8 H54 Q59 5.8 59 10.8 V40 H3Z" fill="#4a80e8"/>
<path d="M7.8 20 L11.4 12 H52 V20Z" fill="#bcd3f8"/>
<path d="M7.3 20 L10.5 13.9 H52 V20Z" fill="#fffdf8"/>
<path d="M0 23 Q0 18.3 4.7 18.3 H29 Q30.8 18.3 31.8 16.8 L34 13 Q35 11.3 37 11.3 H57.7 Q62.6 11.3 62.3 16.2 L59.4 48.4 Q59 53.3 54.1 53.3 H8.3 Q3.4 53.3 3 48.4Z" fill="#8fb8f7"/>
</svg>
<div class="card" style="left:155px;top:506px;background:#eaf2ff;"></div>
<div class="cb" style="left:159px;top:509px;border-color:#5d6375"></div>
<svg class="abs" style="left:189px;top:533px" width="63" height="54" viewBox="0 0 63 54">
<path d="M3 5 Q3 0 8 0 H22.5 Q24.5 0 26 1.5 L29.8 5.8 H54 Q59 5.8 59 10.8 V40 H3Z" fill="#4a80e8"/>
<path d="M7.8 20 L11.4 12 H52 V20Z" fill="#bcd3f8"/>
<path d="M7.3 20 L10.5 13.9 H52 V20Z" fill="#fffdf8"/>
<path d="M0 23 Q0 18.3 4.7 18.3 H29 Q30.8 18.3 31.8 16.8 L34 13 Q35 11.3 37 11.3 H57.7 Q62.6 11.3 62.3 16.2 L59.4 48.4 Q59 53.3 54.1 53.3 H8.3 Q3.4 53.3 3 48.4Z" fill="#8fb8f7"/>
</svg>
<div class="card" style="left:302px;top:506px;background:#eaf2ff;"></div>
<div class="cb" style="left:306px;top:509px;border-color:#5d6375"></div>
<svg class="abs" style="left:336px;top:533px" width="63" height="54" viewBox="0 0 63 54">
<path d="M3 5 Q3 0 8 0 H22.5 Q24.5 0 26 1.5 L29.8 5.8 H54 Q59 5.8 59 10.8 V40 H3Z" fill="#4a80e8"/>
<path d="M7.8 20 L11.4 12 H52 V20Z" fill="#bcd3f8"/>
<path d="M7.3 20 L10.5 13.9 H52 V20Z" fill="#fffdf8"/>
<path d="M0 23 Q0 18.3 4.7 18.3 H29 Q30.8 18.3 31.8 16.8 L34 13 Q35 11.3 37 11.3 H57.7 Q62.6 11.3 62.3 16.2 L59.4 48.4 Q59 53.3 54.1 53.3 H8.3 Q3.4 53.3 3 48.4Z" fill="#8fb8f7"/>
</svg>
<div class="card" style="left:449px;top:506px;background:#eaf2ff;"></div>
<div class="cb" style="left:453px;top:509px;border-color:#5d6375"></div>
<svg class="abs" style="left:483px;top:533px" width="63" height="54" viewBox="0 0 63 54">
<path d="M3 5 Q3 0 8 0 H22.5 Q24.5 0 26 1.5 L29.8 5.8 H54 Q59 5.8 59 10.8 V40 H3Z" fill="#4a80e8"/>
<path d="M7.8 20 L11.4 12 H52 V20Z" fill="#bcd3f8"/>
<path d="M7.3 20 L10.5 13.9 H52 V20Z" fill="#fffdf8"/>
<path d="M0 23 Q0 18.3 4.7 18.3 H29 Q30.8 18.3 31.8 16.8 L34 13 Q35 11.3 37 11.3 H57.7 Q62.6 11.3 62.3 16.2 L59.4 48.4 Q59 53.3 54.1 53.3 H8.3 Q3.4 53.3 3 48.4Z" fill="#8fb8f7"/>
</svg>
<div class="card" style="left:596px;top:506px;background:#eaf2ff;"></div>
<div class="cb" style="left:600px;top:509px;border-color:#5d6375"></div>
<svg class="abs" style="left:630px;top:533px" width="63" height="54" viewBox="0 0 63 54">
<path d="M3 5 Q3 0 8 0 H22.5 Q24.5 0 26 1.5 L29.8 5.8 H54 Q59 5.8 59 10.8 V40 H3Z" fill="#4a80e8"/>
<path d="M7.8 20 L11.4 12 H52 V20Z" fill="#bcd3f8"/>
<path d="M7.3 20 L10.5 13.9 H52 V20Z" fill="#fffdf8"/>
<path d="M0 23 Q0 18.3 4.7 18.3 H29 Q30.8 18.3 31.8 16.8 L34 13 Q35 11.3 37 11.3 H57.7 Q62.6 11.3 62.3 16.2 L59.4 48.4 Q59 53.3 54.1 53.3 H8.3 Q3.4 53.3 3 48.4Z" fill="#8fb8f7"/>
</svg>
<div class="card" style="left:743px;top:506px;background:#eaf2ff;"></div>
<div class="cb" style="left:747px;top:509px;border-color:#5d6375"></div>
<svg class="abs" style="left:777px;top:533px" width="63" height="54" viewBox="0 0 63 54">
<path d="M3 5 Q3 0 8 0 H22.5 Q24.5 0 26 1.5 L29.8 5.8 H54 Q59 5.8 59 10.8 V40 H3Z" fill="#4a80e8"/>
<path d="M7.8 20 L11.4 12 H52 V20Z" fill="#bcd3f8"/>
<path d="M7.3 20 L10.5 13.9 H52 V20Z" fill="#fffdf8"/>
<path d="M0 23 Q0 18.3 4.7 18.3 H29 Q30.8 18.3 31.8 16.8 L34 13 Q35 11.3 37 11.3 H57.7 Q62.6 11.3 62.3 16.2 L59.4 48.4 Q59 53.3 54.1 53.3 H8.3 Q3.4 53.3 3 48.4Z" fill="#8fb8f7"/>
</svg>
</div>
<div class="abs" style="left:41px;top:762px;width:54px;height:54px;border-radius:50%;background:radial-gradient(circle,#fff 0,#fff 21.5px,#c3d6fb 22.5px,#cfdffc 25px,rgba(220,232,253,0.3) 27px)"></div>
<svg class="abs" style="left:54px;top:775px" width="28" height="28" viewBox="0 0 28 28">
  <path d="M6.3 15.9 L11.5 21.1 L24.2 7.9" fill="none" stroke="#0d5cf6" stroke-width="4.8" stroke-linecap="round" stroke-linejoin="round"/>
</svg>
<div class="t" style="left:112px;top:782px;font-size:15px;font-weight:bold;color:#1d1f26;letter-spacing:-0.05px">Scan Completed, Files Found:</div>
<div class="t" style="left:330px;top:782px;font-size:15px;color:#1a62f0;-webkit-text-stroke:0.3px #1a62f0;letter-spacing:0.5px">480453</div>
<div class="t" style="left:388px;top:782px;font-size:15px;color:#5a6070;-webkit-text-stroke:0.3px #5a6070;letter-spacing:-0.6px">(161.12 GB)</div>
<div class="abs" style="left:1028px;top:773px;width:170px;height:32px;background:#0a5cff;border-radius:5px"></div>
<div class="t" style="left:1028px;top:782.6px;width:170px;text-align:center;font-size:14px;color:#fff;-webkit-text-stroke:0.45px #fff;letter-spacing:-0.15px">Recover All ...</div>
</body></html>
